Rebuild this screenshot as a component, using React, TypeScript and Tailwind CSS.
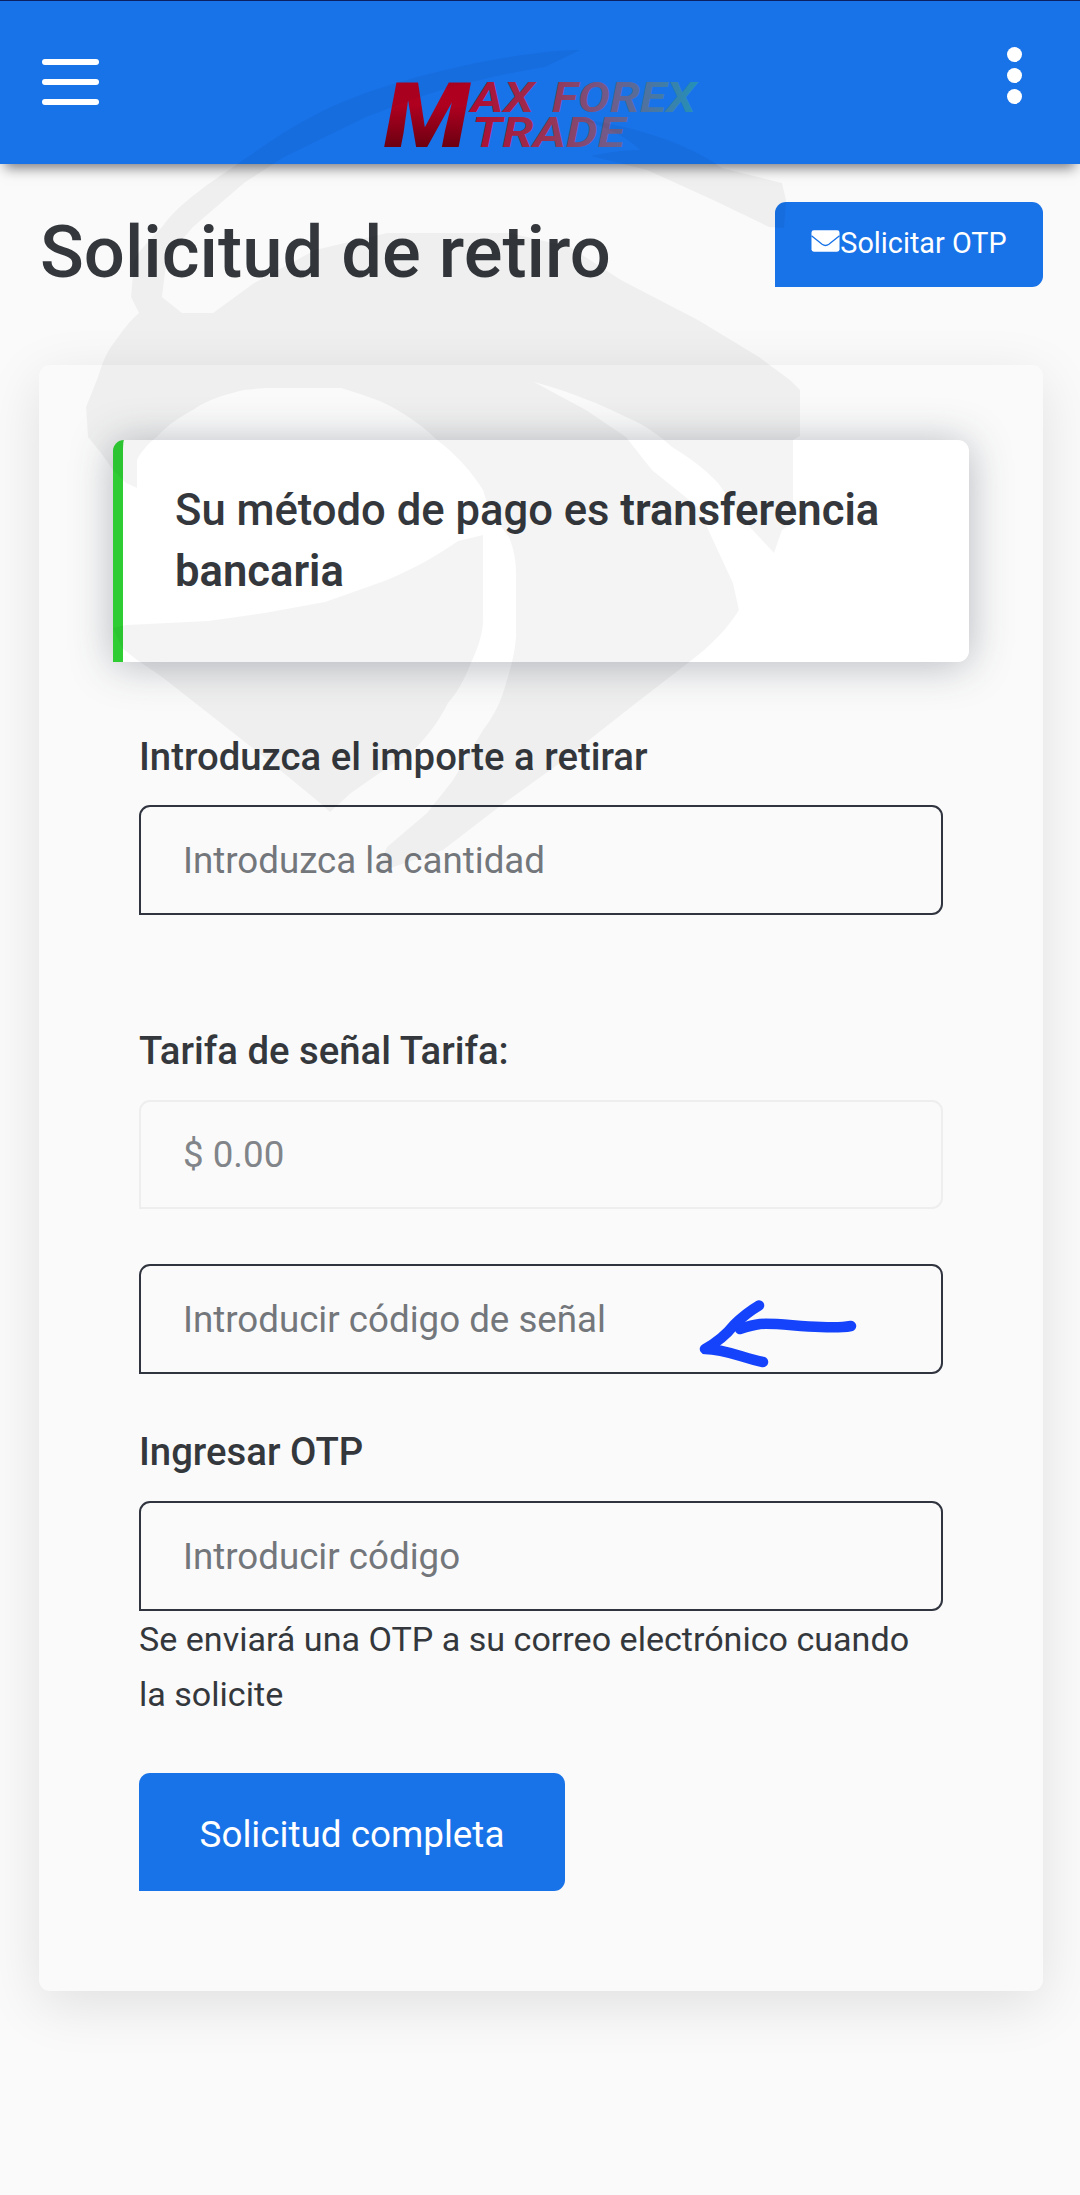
import type { ReactNode } from 'react'
import { clsx } from 'clsx'

interface FieldProps {
  placeholder: string
  disabled?: boolean
  className?: string
}

function Field({ placeholder, disabled = false, className }: FieldProps) {
  return (
    <input
      type="text"
      placeholder={placeholder}
      disabled={disabled}
      className={clsx(
        'block w-full rounded-[11px] rounded-bl-none border-2 bg-transparent pl-[42px] pr-8 text-[36.7px] outline-none',
        disabled
          ? 'h-[109px] border-[#eeeeee] placeholder:text-[#818589]'
          : 'h-[110px] border-[#30343f] placeholder:text-[#73777b]',
        className,
      )}
    />
  )
}

function Label({ children, className }: { children: ReactNode; className?: string }) {
  return (
    <label className={clsx('block h-[46px] whitespace-nowrap text-[38.3px] font-medium leading-[46px]', className)}>
      {children}
    </label>
  )
}

function Logo() {
  return (
    <svg
      className="h-[96px] w-[344px] overflow-visible"
      viewBox="370 64 344 96"
      fontFamily="Roboto, 'Liberation Sans', sans-serif"
      fontStyle="italic"
      fontWeight="900"
    >
      <defs>
        <linearGradient id="logo-mark" x1="0" y1="82" x2="0" y2="147" gradientUnits="userSpaceOnUse">
          <stop offset="0.35" stopColor="#b00020" />
          <stop offset="1" stopColor="#6c0010" />
        </linearGradient>
        <linearGradient id="logo-word" x1="468" y1="0" x2="697" y2="0" gradientUnits="userSpaceOnUse">
          <stop offset="0" stopColor="#b00c30" />
          <stop offset="0.35" stopColor="#973455" />
          <stop offset="0.6" stopColor="#735a88" />
          <stop offset="0.8" stopColor="#4a76a2" />
          <stop offset="1" stopColor="#2391b8" />
        </linearGradient>
      </defs>
      <text x="383" y="147" fontSize="91" textLength="85" lengthAdjust="spacingAndGlyphs" fill="url(#logo-mark)">
        M
      </text>
      <g fill="url(#logo-word)" fontSize="42" fontWeight="700">
        <text x="470" y="112" textLength="63" lengthAdjust="spacingAndGlyphs">
          AX
        </text>
        <text x="551" y="112" textLength="144" lengthAdjust="spacingAndGlyphs">
          FOREX
        </text>
        <text x="471" y="147" textLength="153" lengthAdjust="spacingAndGlyphs">
          TRADE
        </text>
      </g>
    </svg>
  )
}

function Header() {
  return (
    <header className="flex h-[164px] items-start justify-between border-t border-[#0b1f63] bg-[#1872e8] pl-[42px] pr-[58px] shadow-[0_9px_12px_-5px_rgba(20,20,30,0.55)]">
      <button type="button" aria-label="Menú" className="mt-[58px] flex flex-col gap-[14px]">
        <span className="h-[6px] w-[57px] rounded-sm bg-white" />
        <span className="h-[6px] w-[57px] rounded-sm bg-white" />
        <span className="h-[6px] w-[57px] rounded-sm bg-white" />
      </button>
      <div className="mr-[21px] mt-[63px]">
        <Logo />
      </div>
      <button type="button" aria-label="Más opciones" className="mt-[46px] flex flex-col gap-[6px]">
        <span className="size-[15px] rounded-full bg-white" />
        <span className="size-[15px] rounded-full bg-white" />
        <span className="size-[15px] rounded-full bg-white" />
      </button>
    </header>
  )
}

function EnvelopeIcon() {
  return (
    <svg viewBox="0 0 30 24" className="h-[24px] w-[29px]" aria-hidden>
      <rect x="0.5" y="1" width="29" height="22" rx="2.5" fill="#fff" />
      <path d="M0.5 6.500 L11.5 15.400 Q15 18 18.5 15.400 L29.5 6.500" fill="none" stroke="#1872e8" strokeWidth="1.4" />
    </svg>
  )
}

// Brand silhouette laid over the whole page
function Watermark() {
  return (
    <svg
      className="pointer-events-none absolute left-0 top-0 h-[900px] w-[860px]"
      viewBox="0 0 860 900"
      fill="#000"
      fillOpacity="0.042"
      aria-hidden
    >
      <path d="M580 50 C545 50 480 60 417 77 C370 90 335 104 315 115 C285 130 258 150 239 163 C220 176 205 186 198 192 C180 205 168 218 162 227 C145 245 135 255 134 262 L131 297 L139 313 C128 322 122 332 116 340 C106 352 102 364 98 377 L86 407 L88 437 L101 453 L113 470 L126 483 L137 488 L137 460 C142 450 150 442 157 437 C168 424 182 416 193 410 C210 398 228 394 244 390 L266 388 L341 388 C360 394 380 400 392 407 C412 418 427 430 437 440 C458 456 473 474 483 490 L489 510 L509 537 C514 550 516 562 516 573 L516 637 C514 660 508 676 504 690 C499 706 492 718 483 730 L453 780 L427 813 L387 847 L376 873 L443 850 L499 807 L560 763 L631 707 L688 663 C712 645 728 628 739 610 L733 583 L713 540 L698 507 L652 470 L626 437 L586 410 L534 382 C570 392 600 404 626 417 C645 425 660 436 672 447 C690 458 706 470 718 483 L745 522 L774 553 L782 530 L793 523 L793 440 L800 436 L800 390 L790 380 L759 357 L698 320 L621 280 L570 247 L540 240 L509 233 L387 233 L315 250 L254 283 L213 313 L182 313 L162 297 L167 257 L193 227 L244 183 L284 157 L366 117 C400 104 430 92 468 83 C500 75 525 70 545 67 Z" />
      <path d="M113 628 L126 625 L208 621 L264 613 L325 602 L387 580 C420 566 442 552 458 541 L483 535 L483 623 C482 637 477 650 471 663 C464 680 458 692 448 703 C440 720 428 735 417 747 L351 793 L330 812 L320 803 L264 757 L213 717 L162 677 L137 660 L122 648 Z" />
      <path d="M575 118 C620 124 680 138 722 168 L782 183 L786 200 L784 228 L769 227 L713 200 L647 170 L591 156 C610 152 625 150 640 150 C625 135 600 124 575 118 Z" />
    </svg>
  )
}

export default function App() {
  return (
    <div className="relative h-[2195px] w-[1080px] overflow-hidden bg-[#fafafa] font-[Roboto,'Liberation_Sans',sans-serif] text-[#34383c]">
      <Header />

      <main className="flex flex-col pl-[39px] pr-[37px]">
        <div className="flex h-[201px] items-start justify-between">
          <h1 className="ml-px mt-[46px] whitespace-nowrap text-[72.4px] font-medium leading-[86px]">Solicitud de retiro</h1>
          <button
            type="button"
            className="mt-[38px] flex h-[85px] w-[268px] justify-center rounded-[11px] rounded-bl-none bg-[#1872e8] pt-[24px] text-white"
          >
            <span className="mt-[3px] flex h-[24px]">
              <EnvelopeIcon />
            </span>
            <span className="whitespace-nowrap text-[28.8px] leading-[35px]">Solicitar OTP</span>
          </button>
        </div>

        <section className="flex h-[1626px] flex-col rounded-[11px] bg-[#fafafa] px-[74px] pt-[75px] shadow-[0_14px_56px_rgba(0,0,0,0.105)]">
          <div className="h-[222px] rounded-[11px] rounded-bl-none border-l-[10px] border-[#2fcd33] bg-white pl-[52px] pt-[40px] shadow-[0_3px_41px_rgba(50,60,75,0.34)]">
            <p className="text-[43.6px] font-medium leading-[61px]">
              Su método de pago es <b className="font-semibold">transferencia</b>
              <br />
              <b className="font-semibold">bancaria</b>
            </p>
          </div>

          <form className="mx-[26px] flex flex-col">
            <Label className="mt-[72px]">Introduzca el importe a retirar</Label>
            <Field className="mt-[25px]" placeholder="Introduzca la cantidad" />

            <Label className="mt-[113px]">Tarifa de señal Tarifa:</Label>
            <Field className="mt-[26px]" placeholder="$ 0.00" disabled />

            <div className="relative mt-[55px]">
              <Field placeholder="Introducir código de señal" />
              {/* hand-drawn pointer at the signal code */}
              <svg
                className="pointer-events-none absolute left-[555px] top-[32px] h-[76px] w-[170px]"
                viewBox="694 1296 170 76"
                fill="none"
                stroke="#1443fb"
                strokeWidth="10.5"
                strokeLinecap="round"
                strokeLinejoin="round"
              >
                <path d="M851 1326 C840 1328 830 1327.500 821 1327 C795 1326 775 1323 760 1324 C752 1325 746 1327 740 1329" />
                <path d="M759 1305.500 C748 1312 740 1319 734 1325 C726 1335 716 1343 705 1349 C725 1349 743 1358 763 1362" />
              </svg>
            </div>

            <Label className="mt-[55px]">Ingresar OTP</Label>
            <Field className="mt-[26px]" placeholder="Introducir código" />
            <small className="mt-px block w-[790px] text-[34.1px] leading-[55px]">
              Se enviará una OTP a su correo electrónico cuando la solicite
            </small>

            <button
              type="button"
              className="mt-[51px] h-[118px] w-[426px] rounded-[11px] rounded-bl-none bg-[#1872e8] pt-1.5 text-[36.8px] text-white"
            >
              Solicitud completa
            </button>
          </form>
        </section>
      </main>

      <Watermark />
    </div>
  )
}
